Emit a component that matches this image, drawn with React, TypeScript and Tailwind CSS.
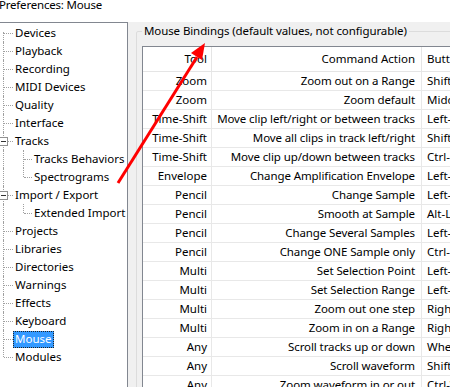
import React from 'react'

type TreeItem = { label: string; level: 0 | 1; box?: boolean; first?: boolean; last?: boolean; lastChild?: boolean; selected?: boolean }

const tree: TreeItem[] = [
  { label: 'Devices', level: 0, first: true },
  { label: 'Playback', level: 0 },
  { label: 'Recording', level: 0 },
  { label: 'MIDI Devices', level: 0 },
  { label: 'Quality', level: 0 },
  { label: 'Interface', level: 0 },
  { label: 'Tracks', level: 0, box: true },
  { label: 'Tracks Behaviors', level: 1 },
  { label: 'Spectrograms', level: 1, lastChild: true },
  { label: 'Import / Export', level: 0, box: true },
  { label: 'Extended Import', level: 1, lastChild: true },
  { label: 'Projects', level: 0 },
  { label: 'Libraries', level: 0 },
  { label: 'Directories', level: 0 },
  { label: 'Warnings', level: 0 },
  { label: 'Effects', level: 0 },
  { label: 'Keyboard', level: 0 },
  { label: 'Mouse', level: 0, selected: true },
  { label: 'Modules', level: 0, last: true },
]

const rows: [string, string, string][] = [
  ['Zoom', 'Zoom out on a Range', 'Shift-Drag'],
  ['Zoom', 'Zoom default', 'Middle-Click'],
  ['Time-Shift', 'Move clip left/right or between tracks', 'Left-Drag'],
  ['Time-Shift', 'Move all clips in track left/right', 'Shift-Left-Drag'],
  ['Time-Shift', 'Move clip up/down between tracks', 'Ctrl-Left-Drag'],
  ['Envelope', 'Change Amplification Envelope', 'Left-Click'],
  ['Pencil', 'Change Sample', 'Left-Click'],
  ['Pencil', 'Smooth at Sample', 'Alt-Left-Click'],
  ['Pencil', 'Change Several Samples', 'Left-Drag'],
  ['Pencil', 'Change ONE Sample only', 'Ctrl-Left-Drag'],
  ['Multi', 'Set Selection Point', 'Left-Click'],
  ['Multi', 'Set Selection Range', 'Left-Drag'],
  ['Multi', 'Zoom out one step', 'Right-Click'],
  ['Multi', 'Zoom in on a Range', 'Right-Drag'],
  ['Any', 'Scroll tracks up or down', 'Wheel-Rotate'],
  ['Any', 'Scroll waveform', 'Shift-Wheel-Rotate'],
  ['Any', 'Zoom waveform in or out', 'Ctrl-Wheel-Rotate'],
]

function TreeRow({ item }: { item: TreeItem }) {
  return (
    <div className="flex h-[18px] items-center">
      <div className="relative h-full w-[13px] shrink-0">
        <span className={`absolute left-[3px] border-l border-dotted border-[#a0a0a0] ${item.first ? 'top-[8px]' : 'top-0'} ${item.last ? 'bottom-[9px]' : 'bottom-0'}`} />
        {item.level === 0 && <span className="absolute left-[4px] top-[9px] w-[9px] border-t border-dotted border-[#a0a0a0]" />}
        {item.box && (
          <span className="absolute -left-[1px] top-[5px] flex h-[9px] w-[9px] items-center justify-center border border-[#919191] bg-white">
            <span className="h-px w-[5px] bg-[#333]" />
          </span>
        )}
      </div>
      {item.level === 1 && (
        <div className="relative h-full w-[19px] shrink-0">
          <span className={`absolute left-[10px] top-0 border-l border-dotted border-[#a0a0a0] ${item.lastChild ? 'bottom-[9px]' : 'bottom-0'}`} />
          <span className="absolute left-[11px] top-[9px] w-[8px] border-t border-dotted border-[#a0a0a0]" />
        </div>
      )}
      <span
        className={`flex h-[17px] items-center whitespace-nowrap border px-[1px] ${
          item.selected ? 'border-dotted border-[#222] bg-[#3399ff] text-white' : 'border-transparent text-black'
        }`}
      >
        {item.label}
      </span>
    </div>
  )
}

export default function App() {
  return (
    <div className="relative h-[387px] w-[450px] overflow-hidden bg-[#f0f0f0] font-['Noto_Sans',sans-serif] text-[11.5px] text-black">
      <div className="h-[22px] overflow-hidden bg-white">
        <div className="-ml-[1px] -mt-[3px] leading-[16px] tracking-[-0.2px]">Preferences: Mouse</div>
      </div>

      <div className="flex h-[365px]">
        <div className="w-[128px] shrink-0 border-r border-t border-[#828790] bg-white pt-[1px]">
          {tree.map(item => (
            <TreeRow key={item.label} item={item} />
          ))}
        </div>

        <div className="pl-[8px] pt-[1px]">
          <fieldset className="h-[420px] w-[400px] rounded-[2px] border border-[#dcdcdc] pl-[5px]">
            <legend className="px-[2px] leading-[16px] tracking-[-0.1px]">Mouse Bindings (default values, not configurable)</legend>
            <div className="mt-[7px] border border-[#828790] bg-white">
              <div className="grid grid-cols-[69px_210px_140px]">
                <div className="flex h-[25px] items-center justify-end border-b border-r border-[#e5e5e5] pr-[4px]">Tool</div>
                <div className="flex h-[25px] items-center justify-end border-b border-r border-[#e5e5e5] pr-[6px]">Command Action</div>
                <div className="flex h-[25px] items-center whitespace-nowrap border-b border-[#e5e5e5] pl-[5px]">Buttons</div>
                {rows.map(([tool, action, button], i) => (
                  <React.Fragment key={i}>
                    <div className="flex h-[19px] items-center justify-end whitespace-nowrap border-b border-r border-[#e8e8e8] pr-[4px]">{tool}</div>
                    <div className="flex h-[19px] items-center justify-end whitespace-nowrap border-b border-r border-[#e8e8e8] pr-[6px] tracking-[-0.1px]">{action}</div>
                    <div className="flex h-[19px] items-center whitespace-nowrap border-b border-[#e8e8e8] pl-[5px]">{button}</div>
                  </React.Fragment>
                ))}
              </div>
            </div>
          </fieldset>
        </div>
      </div>

      <svg className="pointer-events-none absolute left-0 top-0" width="450" height="387" viewBox="0 0 450 387">
        <line x1="118" y1="183" x2="197" y2="57" stroke="#ff0000" strokeWidth="3" />
        <polygon points="205,43 202,60 191,53" fill="#ff0000" />
      </svg>
    </div>
  )
}
